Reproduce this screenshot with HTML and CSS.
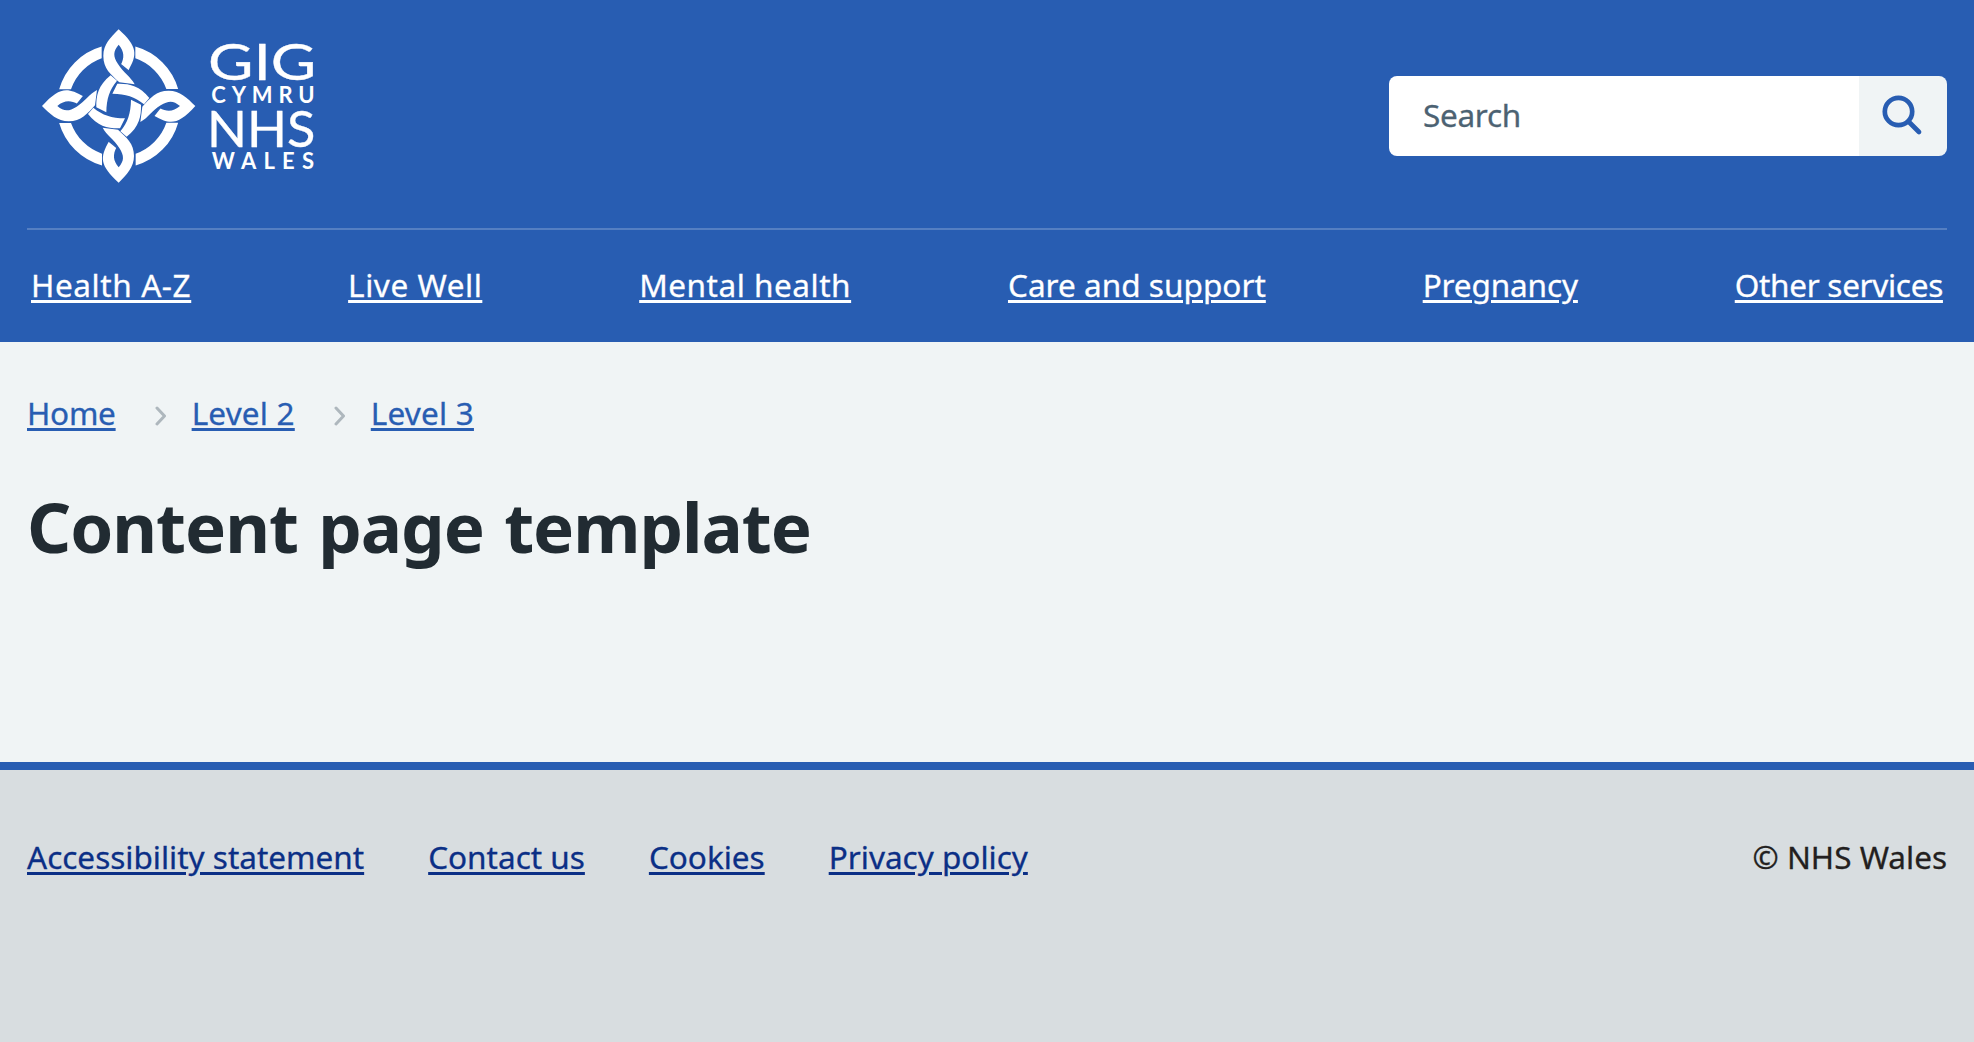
FILE: index.html
```html
<!DOCTYPE html>
<html lang="en">
<head>
<meta charset="utf-8">
<title>Content page template - NHS Wales</title>
<link rel="stylesheet" href="styles.css">
</head>
<body>
<header class="header">
  <div class="masthead">
    <a class="logo" href="#" aria-label="GIG Cymru NHS Wales">
      <svg width="300" height="175" viewBox="0 0 900 525">
        <defs>
          <g id="arm">
            <path d="M50-178.500A185.500 185.500 0 0 1 178.500-51H143A151 151 0 0 0 50-143Z"/>
            <path d="M0-230C-24-206-46-184-46-150C-46-112-24-95 2-71L48-65C36-88 14-100-2-126C-17-150-17-164 0-184C17-164 18-145 6-123L29-106C57-155 57-178 0-230Z"/>
            <path d="M-4-67C30-68 62-62 92-24L76-5C48-28 22-36-19-37Z"/>
          </g>
        </defs>
        <g class="logo-mark" transform="translate(266 258)">
          <use href="#arm"/>
          <use href="#arm" transform="rotate(90)"/>
          <use href="#arm" transform="rotate(180)"/>
          <use href="#arm" transform="rotate(270)"/>
          <g class="logo-cuts">
            <path id="cut" d="M5-125L31-104"/>
            <use href="#cut" transform="rotate(90)"/>
            <use href="#cut" transform="rotate(180)"/>
            <use href="#cut" transform="rotate(270)"/>
          </g>
        </g>
        <g class="logo-text">
          <text class="logo-large" x="534" y="179" textLength="325" lengthAdjust="spacingAndGlyphs">GIG</text>
          <text class="logo-small" x="544" y="248" textLength="310">CYMRU</text>
          <text class="logo-large" x="531" y="382" textLength="325" lengthAdjust="spacingAndGlyphs">NHS</text>
          <text class="logo-small" x="545" y="447" textLength="307">WALES</text>
        </g>
      </svg>
    </a>
    <form class="search">
      <input class="search-input" type="text" placeholder="Search" aria-label="Search">
      <button class="search-button" type="button" aria-label="Search">
        <svg width="44" height="44" viewBox="0 0 44 44"><circle cx="17.500" cy="17.500" r="13.700"/><path d="M27.500 27.500L38 38"/></svg>
      </button>
    </form>
  </div>
  <nav class="nav">
    <a href="#">Health A-Z</a>
    <a href="#">Live Well</a>
    <a href="#">Mental health</a>
    <a href="#">Care and support</a>
    <a href="#">Pregnancy</a>
    <a href="#">Other services</a>
  </nav>
</header>
<main class="main">
  <nav class="breadcrumb">
    <a href="#">Home</a>
    <svg class="chevron" width="12" height="20" viewBox="0 0 12 20"><path d="M2 2L9.500 10L2 18"/></svg>
    <a href="#">Level 2</a>
    <svg class="chevron" width="12" height="20" viewBox="0 0 12 20"><path d="M2 2L9.500 10L2 18"/></svg>
    <a href="#">Level 3</a>
  </nav>
  <h1 class="title">Content page template</h1>
</main>
<footer class="footer">
  <nav class="footer-links">
    <a href="#">Accessibility statement</a>
    <a href="#">Contact us</a>
    <a href="#">Cookies</a>
    <a href="#">Privacy policy</a>
  </nav>
  <p class="copyright">© NHS Wales</p>
</footer>
</body>
</html>
```
FILE: styles.css
```css
* { box-sizing: border-box; }
body {
  margin: 0;
  height: 1042px;
  display: flex;
  flex-direction: column;
  overflow: hidden;
  background: #f0f4f5;
  color: #212b32;
  font: 31.5px/48px "Noto Sans", "Open Sans", sans-serif;
  -webkit-text-stroke: 0.3px currentColor;
}
a {
  color: inherit;
  white-space: nowrap;
  text-decoration-thickness: 3px;
  text-underline-offset: 3px;
}
.header { height: 342px; padding: 0 27px; background: #285db2; color: #fff; }
.masthead {
  display: flex;
  justify-content: space-between;
  height: 230px;
  border-bottom: 2px solid #557fc2;
}
.logo { margin: 20px 0 0 3px; height: 175px; }
.logo svg { display: block; }
.logo-mark { fill: #fff; }
.logo-cuts { fill: none; stroke: #285db2; stroke-width: 4; }
.logo-text { fill: #fff; font-family: Lato, sans-serif; -webkit-text-stroke: 0; }
.logo-large { font-size: 152px; stroke: #fff; stroke-width: 1; }
.logo-small { font-size: 66px; font-weight: 700; }
.search {
  display: flex;
  width: 558px;
  height: 80px;
  margin: 76px 0 0;
  border-radius: 8px;
  overflow: hidden;
}
.search-input {
  flex: 1;
  min-width: 0;
  border: 0;
  padding: 0 0 2px 34px;
  background: #fff;
  font: inherit;
  letter-spacing: -0.3px;
}
.search-input::placeholder { color: #4c6272; opacity: 1; }
.search-button {
  display: flex;
  width: 88px;
  border: 0;
  padding: 18px 0 0 22px;
  background: #f0f4f5;
}
.search-button svg { fill: none; stroke: #285db2; stroke-width: 4.7; stroke-linecap: round; }
.nav { display: flex; justify-content: space-between; padding: 31px 4px 0; }
.nav a:nth-child(1) { letter-spacing: 0.6px; }
.nav a:nth-child(2) { letter-spacing: 0.55px; }
.nav a:nth-child(3) { letter-spacing: 0.53px; }
.nav a:nth-child(4) { letter-spacing: 0.03px; }
.nav a:nth-child(5) { letter-spacing: -0.13px; }
.nav a:nth-child(6) { letter-spacing: -0.3px; }
.main { height: 420px; padding: 47px 27px 0; }
.breadcrumb { display: flex; align-items: center; color: #285db2; }
.breadcrumb a:first-child { letter-spacing: -0.25px; }
.breadcrumb a:nth-child(n + 2) { letter-spacing: 0.2px; }
.chevron { margin: 5px 25px 0 39px; fill: none; stroke: #aeb7bd; stroke-width: 3; stroke-linecap: round; stroke-linejoin: round; }
.title {
  margin: 45px 0 0;
  font-size: 69px;
  line-height: 88px;
  font-weight: 700;
  letter-spacing: -1.05px;
  word-spacing: 3.5px;
  white-space: nowrap;
  -webkit-text-stroke: 0;
}
.footer {
  flex: 1;
  display: flex;
  justify-content: space-between;
  padding: 63px 27px 0;
  border-top: 8px solid #285db2;
  background: #d8dde0;
}
.footer-links { display: flex; gap: 64px; color: #0b2f86; }
.copyright { margin: 0; color: #231f20; }
```
